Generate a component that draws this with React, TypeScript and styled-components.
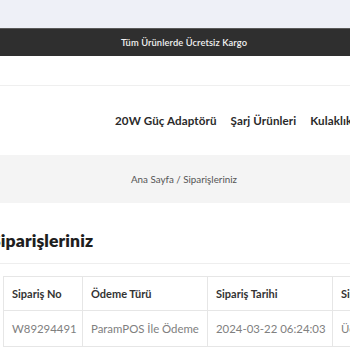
import styled, { createGlobalStyle } from 'styled-components';

const GlobalStyle = createGlobalStyle`
  html, body {
    margin: 0;
    padding: 0;
    background: #fff;
    overflow: hidden;
  }
  body {
    font-family: Lato, 'Noto Sans', sans-serif;
    color: #222;
  }
`;

const Page = styled.div`
  width: 368px;
`;

const TopBand = styled.div`
  height: 28px;
  background: #eef0f7;
`;

const Announcement = styled.div`
  height: 27px;
  background: #2f2f2f;
  border-top: 1px solid #5a5a5a;
  display: flex;
  align-items: center;
  justify-content: center;
  color: #f2f2f2;
  font-size: 9.3px;
  font-weight: 600;
  letter-spacing: 0.1px;
`;

const HeaderSpace = styled.div`
  height: 29px;
  border-bottom: 1px solid #efefef;
`;

const Nav = styled.nav`
  height: 69px;
  display: flex;
  align-items: center;
  gap: 14px;
  padding-left: 115px;
  white-space: nowrap;
  overflow: hidden;
`;

const NavItem = styled.a`
  font-size: 11.6px;
  font-weight: 700;
  color: #2a2a2a;
  text-decoration: none;
  letter-spacing: 0.1px;
`;

const Breadcrumb = styled.div`
  height: 48px;
  background: #f4f4f4;
  display: flex;
  align-items: center;
  justify-content: center;
  font-size: 9.8px;
  color: #555;
`;

const TitleBlock = styled.div`
  height: 61px;
  border-bottom: 1px solid #eeeeee;
  display: flex;
  align-items: center;
  padding-top: 14px;
  box-sizing: border-box;
`;

const Title = styled.h2`
  margin: 0 0 0 -9px;
  font-size: 17.5px;
  font-weight: 800;
  color: #1e1e1e;
  letter-spacing: 0.1px;
`;

const TableWrap = styled.div`
  padding: 12px 0 0 3px;
`;

const Table = styled.table`
  border-collapse: collapse;
  table-layout: fixed;
  width: 430px;
`;

const Col = styled.col<{ w: number }>`
  width: ${(p) => p.w}px;
`;

const Th = styled.th`
  border: 1px solid #e6e6e6;
  height: 33px;
  padding: 0 8px;
  text-align: left;
  font-size: 11px;
  font-weight: 700;
  color: #333;
  white-space: nowrap;
  overflow: hidden;
`;

const Td = styled.td`
  border: 1px solid #e6e6e6;
  height: 35px;
  padding: 0 8px;
  font-size: 11.4px;
  color: #808080;
  white-space: nowrap;
  overflow: hidden;
`;

const columns = [79, 125, 125, 101];

export default function App() {
  return (
    <Page>
      <GlobalStyle />
      <TopBand />
      <Announcement>Tüm Ürünlerde Ücretsiz Kargo</Announcement>
      <HeaderSpace />
      <Nav>
        <NavItem>20W Güç Adaptörü</NavItem>
        <NavItem>Şarj Ürünleri</NavItem>
        <NavItem>Kulaklıklar</NavItem>
      </Nav>
      <Breadcrumb>Ana Sayfa / Siparişleriniz</Breadcrumb>
      <TitleBlock>
        <Title>Siparişleriniz</Title>
      </TitleBlock>
      <TableWrap>
        <Table>
          <colgroup>
            {columns.map((w, i) => (
              <Col key={i} w={w} />
            ))}
          </colgroup>
          <thead>
            <tr>
              <Th>Sipariş No</Th>
              <Th>Ödeme Türü</Th>
              <Th>Sipariş Tarihi</Th>
              <Th>Sipariş Durumu</Th>
            </tr>
          </thead>
          <tbody>
            <tr>
              <Td>W89294491</Td>
              <Td>ParamPOS İle Ödeme</Td>
              <Td>2024-03-22 06:24:03</Td>
              <Td>Ücret Bekleniyor</Td>
            </tr>
          </tbody>
        </Table>
      </TableWrap>
    </Page>
  );
}
